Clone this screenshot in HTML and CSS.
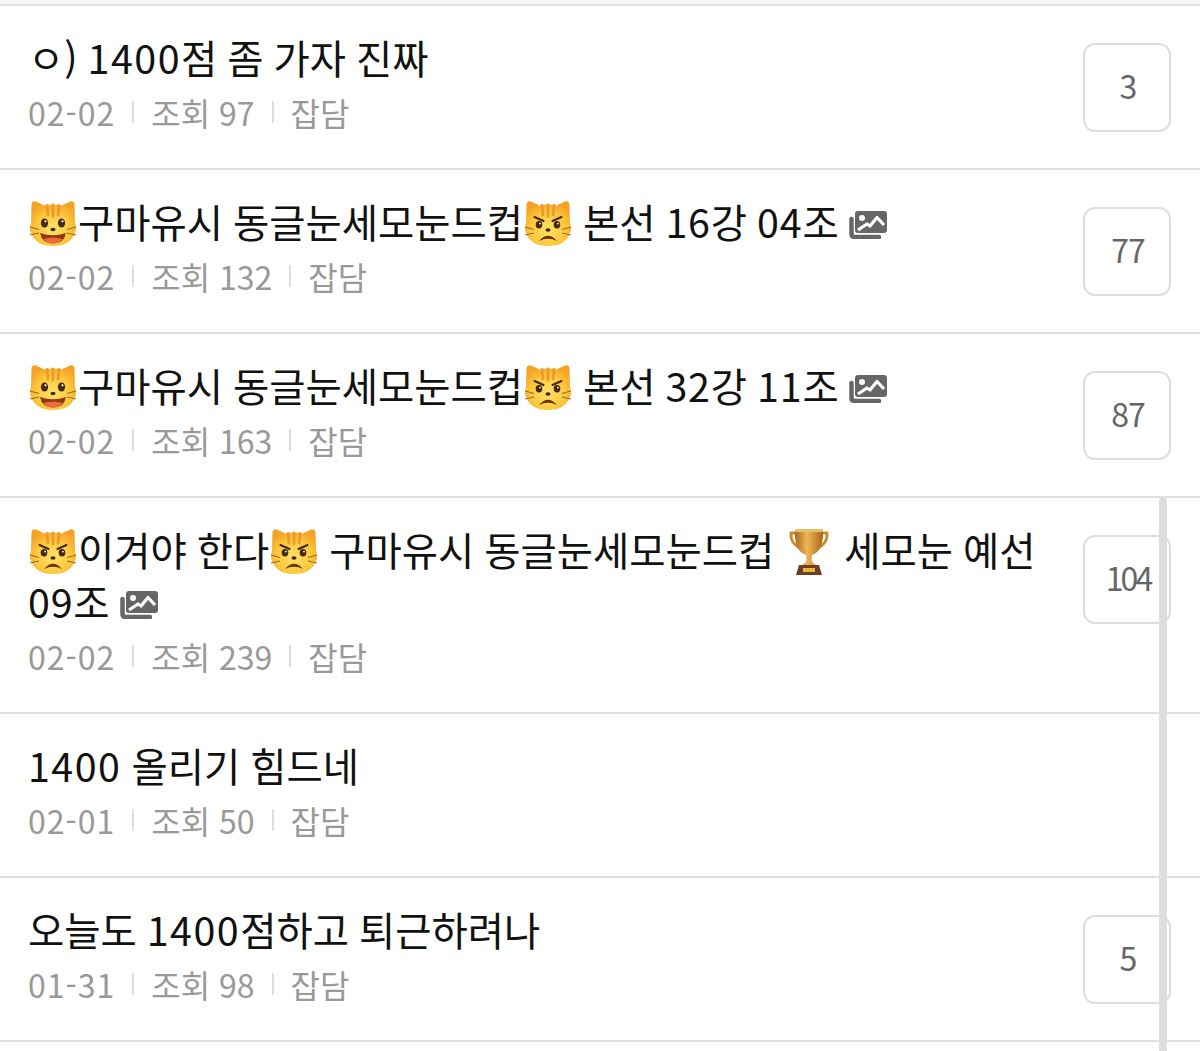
FILE: index.html
```html
<!DOCTYPE html>
<html lang="ko">
<head>
    <meta charset="UTF-8">
    <meta name="viewport" content="width=device-width, initial-scale=1.0">
    <title>게시글 목록</title>
    <link rel="stylesheet" href="styles.css">
</head>
<body>
    <svg class="sprites" width="0" height="0" aria-hidden="true">
        <defs>
            <radialGradient id="fur" cx="0.5" cy="0.62" r="0.62">
                <stop offset="0" stop-color="#ffe268"/>
                <stop offset="0.6" stop-color="#fdc83c"/>
                <stop offset="1" stop-color="#f5a125"/>
            </radialGradient>
            <linearGradient id="gold" x1="0" y1="0" x2="1" y2="0">
                <stop offset="0" stop-color="#a8661c"/>
                <stop offset="0.42" stop-color="#f0b556"/>
                <stop offset="1" stop-color="#a9691c"/>
            </linearGradient>
        </defs>
        <symbol id="cat-head" viewBox="0 0 48 48">
            <path d="M2.500 5 Q2.500 0.500 7 1.500 L15.500 5.500 Q24 3.500 32.500 5.500 L41 1.500 Q45.500 0.500 45.500 5 L46 23 Q48 30 46 33 Q41 46 24 46 Q7 46 2 33 Q0 30 2 23 Z" fill="url(#fur)"/>
            <path d="M18 5.500 L19 15 M24 5 L24 16 M30 5.500 L29 15" stroke="#ee9a2a" stroke-width="2.800" stroke-linecap="round" fill="none"/>
            <path d="M1 27 L10 29.500 M1 35 L10 33 M47 27 L38 29.500 M47 35 L38 33" stroke="#7d5c24" stroke-width="0.900" fill="none"/>
        </symbol>
        <symbol id="cat-smile" viewBox="0 0 48 48">
            <use href="#cat-head"/>
            <ellipse cx="15.500" cy="23" rx="3.600" ry="4.600" fill="#43290f"/>
            <ellipse cx="32.500" cy="23" rx="3.600" ry="4.600" fill="#43290f"/>
            <circle cx="16.500" cy="21.300" r="1.100" fill="#fff"/>
            <circle cx="33.500" cy="21.300" r="1.100" fill="#fff"/>
            <ellipse cx="24" cy="29.500" rx="2.600" ry="1.800" fill="#43290f"/>
            <path d="M11 33 Q24 37.500 37 33 Q35 43.500 24 43.500 Q13 43.500 11 33 Z" fill="#8f3a14"/>
            <path d="M14.500 39 Q24 36 33.500 39 Q30 43.500 24 43.500 Q18 43.500 14.500 39 Z" fill="#ef6a3a"/>
        </symbol>
        <symbol id="cat-angry" viewBox="0 0 48 48">
            <use href="#cat-head"/>
            <path d="M10.500 17 L19.500 21 M37.500 17 L28.500 21" stroke="#43290f" stroke-width="2" stroke-linecap="round"/>
            <ellipse cx="15" cy="24.800" rx="3.300" ry="3.700" fill="#43290f"/>
            <ellipse cx="33" cy="24.800" rx="3.300" ry="3.700" fill="#43290f"/>
            <circle cx="16" cy="23.600" r="0.900" fill="#fff"/>
            <circle cx="34" cy="23.600" r="0.900" fill="#fff"/>
            <ellipse cx="24" cy="30" rx="2.600" ry="1.700" fill="#43290f"/>
            <path d="M15 41 Q24 30.500 33 41 Q24 36.500 15 41 Z" fill="#6b3412"/>
        </symbol>
        <symbol id="trophy" viewBox="0 0 40 48">
            <path d="M8 5 H2 Q1 16 13 21 M32 5 H38 Q39 16 27 21" stroke="#c98a2c" stroke-width="2.800" fill="none"/>
            <path d="M6 2 H34 Q35 23 23 27 L22.500 32 Q23 35 27 37 H13 Q17 35 17.500 32 L17 27 Q5 23 6 2 Z" fill="url(#gold)"/>
            <rect x="6" y="1" width="28" height="3" rx="1" fill="#e8bd68"/>
            <path d="M10 37 H30 L33 47 H7 Z" fill="#6f3f25"/>
            <rect x="14" y="40" width="12" height="4" fill="#e7b73e"/>
        </symbol>
        <symbol id="pics" viewBox="0 0 38 28">
            <path d="M2.500 8 V23 Q2.500 26 5.500 26 H30" stroke="#666" stroke-width="4.500" fill="none" stroke-linecap="round"/>
            <rect x="6" y="0" width="32" height="22" rx="3" fill="#666"/>
            <circle cx="13" cy="7" r="3" fill="#fff"/>
            <path d="M9 19 L18 13 L21 15 L28 6.500 L35 14" stroke="#fff" stroke-width="3.200" fill="none" stroke-linejoin="round"/>
        </symbol>
    </svg>

    <ul class="post-list">
        <li class="post">
            <div class="post-body">
                <div class="post-title">ㅇ) <span class="num long">1400</span>점 좀 가자 진짜</div>
                <div class="post-meta"><span class="date">02-02</span><i></i><span>조회 97</span><i></i><span>잡담</span></div>
            </div>
            <div class="reply-box">3</div>
        </li>
        <li class="post">
            <div class="post-body">
                <div class="post-title"><svg class="emoji"><use href="#cat-smile"/></svg>구마유시 동글눈세모눈드컵<svg class="emoji"><use href="#cat-angry"/></svg> 본선 <span class="num">16</span>강 <span class="num">04</span>조 <svg class="pic-icon"><use href="#pics"/></svg></div>
                <div class="post-meta"><span class="date">02-02</span><i></i><span>조회 132</span><i></i><span>잡담</span></div>
            </div>
            <div class="reply-box">77</div>
        </li>
        <li class="post">
            <div class="post-body">
                <div class="post-title"><svg class="emoji"><use href="#cat-smile"/></svg>구마유시 동글눈세모눈드컵<svg class="emoji"><use href="#cat-angry"/></svg> 본선 <span class="num">32</span>강 <span class="num">11</span>조 <svg class="pic-icon"><use href="#pics"/></svg></div>
                <div class="post-meta"><span class="date">02-02</span><i></i><span>조회 163</span><i></i><span>잡담</span></div>
            </div>
            <div class="reply-box">87</div>
        </li>
        <li class="post post-tall">
            <div class="post-body">
                <div class="post-title"><svg class="emoji"><use href="#cat-angry"/></svg>이겨야 한다<svg class="emoji"><use href="#cat-angry"/></svg> 구마유시 동글눈세모눈드컵 <svg class="trophy"><use href="#trophy"/></svg> 세모눈 예선 <span class="num">09</span>조 <svg class="pic-icon"><use href="#pics"/></svg></div>
                <div class="post-meta"><span class="date">02-02</span><i></i><span>조회 239</span><i></i><span>잡담</span></div>
            </div>
            <div class="reply-box wide">104</div>
        </li>
        <li class="post">
            <div class="post-body">
                <div class="post-title"><span class="num long">1400</span> 올리기 힘드네</div>
                <div class="post-meta"><span class="date">02-01</span><i></i><span>조회 50</span><i></i><span>잡담</span></div>
            </div>
        </li>
        <li class="post">
            <div class="post-body">
                <div class="post-title">오늘도 <span class="num long">1400</span>점하고 퇴근하려나</div>
                <div class="post-meta"><span class="date">01-31</span><i></i><span>조회 98</span><i></i><span>잡담</span></div>
            </div>
            <div class="reply-box">5</div>
        </li>
    </ul>

    <div class="scrollbar"></div>
</body>
</html>
```

FILE: styles.css
```css
html, body {
    margin: 0;
    height: 1051px;
    overflow: hidden;
    background-color: #fff;
}

body {
    position: relative;
    font-family: "Noto Sans CJK KR", "Noto Sans", sans-serif;
}

.sprites {
    position: absolute;
}

.post-list {
    list-style: none;
    margin: 0;
    padding: 4px 0 0;
    background-color: #f7f7f7;
}

.post {
    display: flex;
    align-items: flex-start;
    height: 162px;
    padding: 0 29px 0 28px;
    border-top: 2px solid #e0e0e0;
    background-color: #fff;
}

.post-tall {
    height: 214px;
}

.post:last-child {
    border-bottom: 2px solid #e0e0e0;
}

.post-body {
    flex: 1;
    min-width: 0;
    padding-top: 25px;
    padding-right: 40px;
}

.post-title {
    font-size: 39.4px;
    line-height: 52px;
    word-spacing: -1px;
    color: #111;
}

.post-title .num {
    letter-spacing: 0.8px;
}

.post-title .num.long {
    letter-spacing: 1.5px;
}

.emoji {
    width: 50px;
    height: 48px;
    margin: -6px 0;
    vertical-align: -4px;
}

.trophy {
    width: 50px;
    height: 48px;
    margin: -6px 0;
    vertical-align: -4px;
}

.pic-icon {
    width: 38px;
    height: 28px;
    vertical-align: -1px;
}

.post-meta {
    display: flex;
    align-items: center;
    gap: 17px;
    height: 50px;
    margin-top: 4px;
    font-size: 32px;
    color: #999;
}

.post-meta .date {
    letter-spacing: 1px;
}

.post-meta i {
    width: 2px;
    height: 22px;
    background-color: #ddd;
}

.reply-box {
    flex: none;
    display: flex;
    align-items: center;
    justify-content: center;
    width: 82px;
    height: 79px;
    margin-top: 37px;
    padding: 0 0 6px 2px;
    border: 2px solid #ddd;
    border-radius: 12px;
    font-size: 32px;
    letter-spacing: -1px;
    color: #666;
}

.reply-box.wide {
    letter-spacing: -3px;
}

.scrollbar {
    position: absolute;
    top: 497px;
    bottom: 0;
    left: 1159px;
    width: 8px;
    border-radius: 4px 4px 0 0;
    background-color: #ddd;
}
```
